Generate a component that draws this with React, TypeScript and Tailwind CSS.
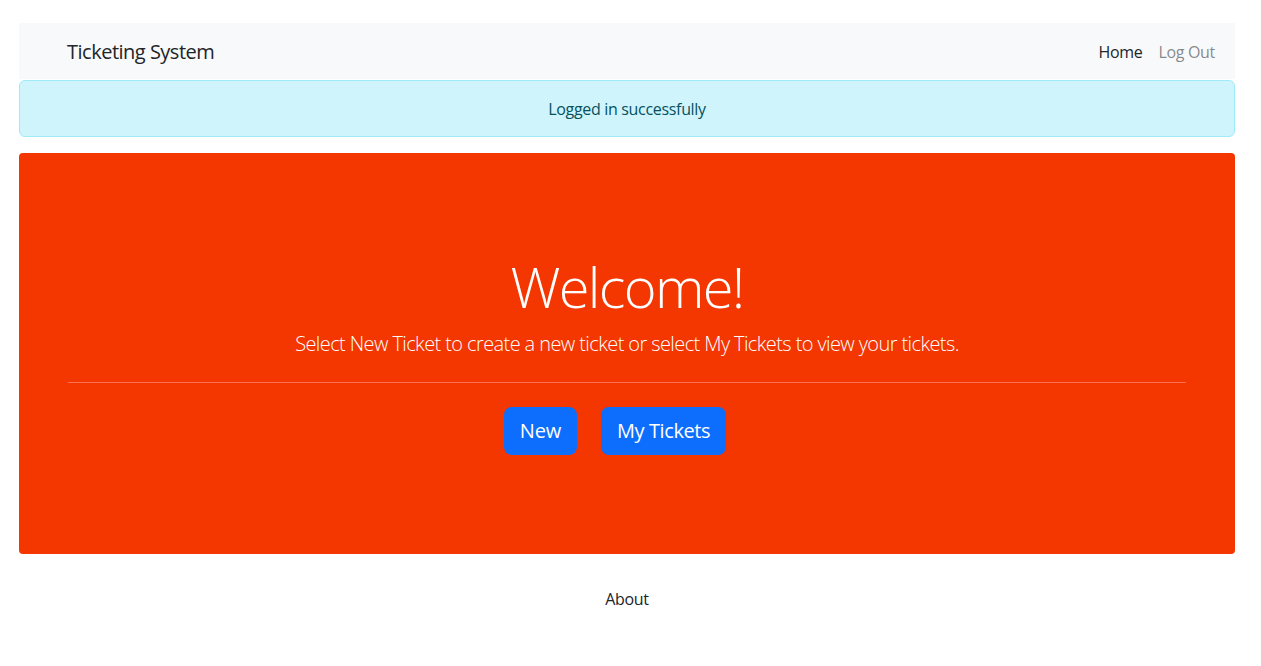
export default function App() {
  return (
    <div className="min-h-screen bg-white text-[#212529] font-['Segoe_UI','Open_Sans',sans-serif] pt-[23px]">
      <div className="mx-[19px] w-[1216px]">
        {/* Navbar */}
        <nav className="flex items-center justify-between h-[56px] bg-[#f8f9fa] pl-[48px] pr-[12px]">
          <a className="mt-[2px] text-[20px] tracking-[-0.025em] text-[#212529]">Ticketing System</a>
          <ul className="mt-[2px] flex items-center text-[16px] tracking-[-0.02em]">
            <li>
              <a className="px-[8px] text-[#212529]">Home</a>
            </li>
            <li>
              <a className="px-[8px] text-[rgba(33,37,41,0.55)]">Log Out</a>
            </li>
          </ul>
        </nav>

        {/* Alert */}
        <div className="mt-px h-[57px] flex items-center justify-center rounded-[6px] border border-[#9eeaf9] bg-[#cff4fc] text-[#055160] text-[16px] tracking-[-0.02em]">
          Logged in successfully
        </div>

        {/* Jumbotron */}
        <div className="mt-[16px] h-[401px] rounded-[4px] bg-[#f43600] px-[49px] pt-[100px] text-white text-center">
          <h1 className="text-[56px] leading-[67px] font-light tracking-[-0.03em]">Welcome!</h1>
          <p className="mt-[9px] text-[20px] leading-[30px] font-light tracking-[-0.03em]">
            Select New Ticket to create a new ticket or select My Tickets to view your tickets.
          </p>
          <hr className="mt-[23px] border-0 border-t border-white/30" />
          <div className="mt-[24px] flex justify-center">
            <button className="mr-[24px] h-[48px] px-[16px] rounded-[8px] bg-[#0d6efd] text-[20px] tracking-[-0.01em] text-white">New</button>
            <button className="mr-[24px] h-[48px] px-[16px] rounded-[8px] bg-[#0d6efd] text-[20px] tracking-[-0.02em] text-white">My Tickets</button>
          </div>
        </div>

        {/* Footer */}
        <footer className="mt-[33px] text-center text-[16px] leading-[24px] tracking-[-0.02em]">
          <a className="text-[#212529]">About</a>
        </footer>
      </div>
    </div>
  );
}
